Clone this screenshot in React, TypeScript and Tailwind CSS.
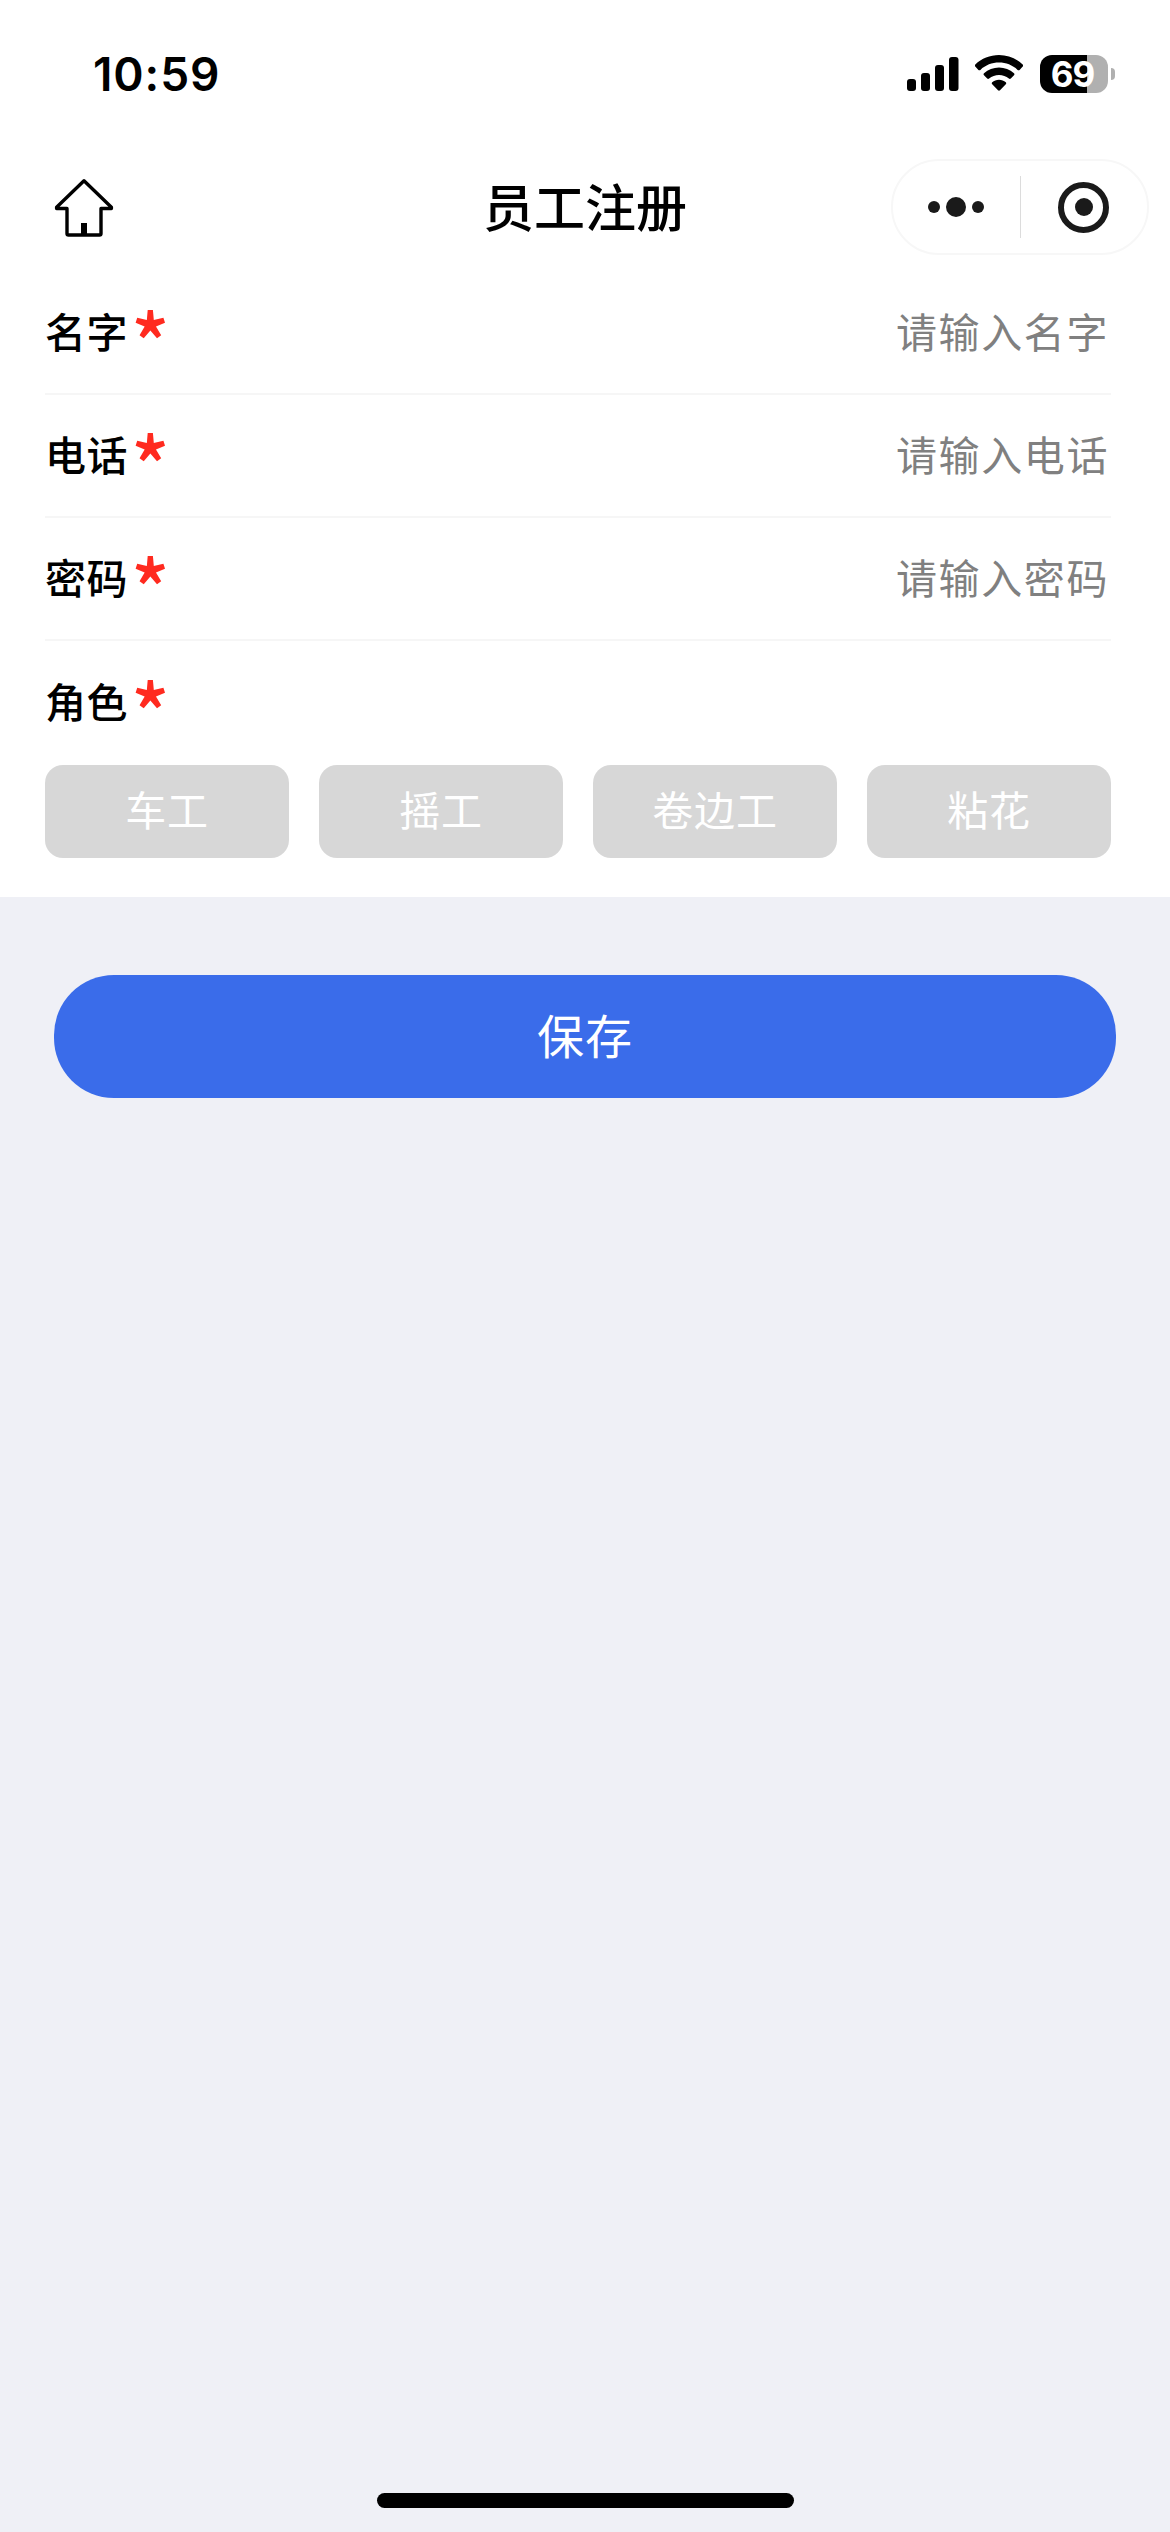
const fields = [
  { label: "名字", placeholder: "请输入名字" },
  { label: "电话", placeholder: "请输入电话" },
  { label: "密码", placeholder: "请输入密码" },
];

const roles = ["车工", "摇工", "卷边工", "粘花"];

function StatusBar() {
  return (
    <div className="flex h-[150px] items-start justify-between pl-[93px] pr-[55px]">
      <span className="mt-[46px] font-['Inter'] text-[46px] font-semibold leading-[56px] tracking-[0.900px]">
        10:59
      </span>
      <div className="mt-[55px] flex items-start">
        <svg className="mt-[2px] h-[34px] w-[52px]" viewBox="0 0 52 34">
          <rect x="0" y="22" width="9" height="12" rx="3" />
          <rect x="14" y="16" width="9" height="18" rx="3" />
          <rect x="28" y="8" width="9" height="26" rx="3" />
          <rect x="42" y="0" width="9.5" height="34" rx="3" />
        </svg>
        <svg className="ml-4 h-[36px] w-[48px]" viewBox="0 0 48 36">
          <path d="M24 0C33 0 41.500 3.500 47.700 9.500C48.300 10.200 48.300 11 47.700 11.600L44.600 14.900C44 15.400 43.200 15.400 42.600 14.900C37.500 10.100 31 7.600 24 7.600S10.500 10.100 5.400 14.900C4.800 15.400 4 15.400 3.400 14.900L.3 11.600C-.3 11-.3 10.200.3 9.500C6.500 3.500 15 0 24 0Z" />
          <path d="M24 12.500C29.600 12.500 34.900 14.600 39 18.300C39.600 18.900 39.600 19.700 39 20.300L35.800 23.500C35.200 24.100 34.500 24.100 33.900 23.500C31.100 21.200 27.700 19.900 24 19.900S16.900 21.200 14.100 23.500C13.500 24.100 12.800 24.100 12.200 23.500L9 20.300C8.400 19.700 8.400 18.900 9 18.300C13.100 14.600 18.400 12.500 24 12.500Z" />
          <path d="M24 24.800C26.600 24.800 29 25.700 30.800 27.300C31.400 27.800 31.400 28.600 30.800 29.200L25 35.200C24.400 35.800 23.600 35.800 23 35.200L17.200 29.200C16.600 28.600 16.600 27.800 17.200 27.300C19 25.700 21.400 24.800 24 24.800Z" />
        </svg>
        <div className="ml-[17px] flex h-[38px] w-[68px] items-center justify-center rounded-[12px] bg-linear-to-r from-black from-[69%] to-[#b0b0b0] to-[69%] pr-[3px]">
          <span className="font-['Inter'] text-[35px] font-bold leading-[38px] tracking-[-1px] text-white">69</span>
        </div>
        <div className="ml-[3px] mt-[13px] h-[12px] w-[4px] rounded-r-full bg-[#b0b0b0]" />
      </div>
    </div>
  );
}

function NavBar() {
  return (
    <div className="grid h-[122px] grid-cols-[1fr_auto_1fr] items-start">
      <svg className="ml-[53px] mt-[27px] h-[62px] w-[62px]" viewBox="0 0 62 62" fill="none" stroke="#000" strokeWidth="3.4" strokeLinejoin="round">
        <path d="M31 3.800L3.600 30.200V31.500H14V56.500C14 57.500 14.500 58 15.500 58H46.500C47.500 58 48 57.500 48 56.500V31.500H58.400V30.200Z" />
        <path d="M31 46V58" strokeWidth="6" />
      </svg>
      <h1 className="mt-[17px] text-[51px] font-medium leading-[76px]">员工注册</h1>
      <div className="mr-[21px] mt-[9px] flex h-[96px] w-[258px] items-center justify-self-end rounded-full border-2 border-[#f7f7f7]">
        <div className="flex flex-1 items-center justify-center gap-[6px]">
          <i className="size-3 rounded-full bg-[#1a1a1a]" />
          <i className="size-5 rounded-full bg-[#1a1a1a]" />
          <i className="size-3 rounded-full bg-[#1a1a1a]" />
        </div>
        <div className="h-[62px] w-px bg-[#dcdcdc]" />
        <div className="flex flex-1 items-center justify-center">
          <div className="flex size-[51px] items-center justify-center rounded-full border-[6px] border-[#1a1a1a]">
            <i className="size-[18px] rounded-full bg-[#1a1a1a]" />
          </div>
        </div>
      </div>
    </div>
  );
}

function Label({ text }: { text: string }) {
  return (
    <div className="flex items-start">
      <span className="text-[41px] font-medium leading-[60px] tracking-[0.500px]">{text}</span>
      <span className="ml-[3px] mt-[9px] h-[51px] text-[80px] font-medium leading-[60px] text-[#ff2a1f]">*</span>
    </div>
  );
}

export default function App() {
  return (
    <div className="flex h-[2532px] w-[1170px] flex-col overflow-hidden bg-[#eff0f6] font-['Noto_Sans_CJK_SC',sans-serif] text-black">
      <header className="bg-white">
        <StatusBar />
        <NavBar />
      </header>

      <section className="h-[625px] bg-white pl-[45px] pr-[59px]">
        {fields.map((field) => (
          <div key={field.label} className="flex h-[123px] items-center justify-between border-b-2 border-[#f6f6f6] pb-[6px] pr-[2px]">
            <Label text={field.label} />
            <span className="text-[41px] leading-[60px] tracking-[1.600px] text-[#808080]">{field.placeholder}</span>
          </div>
        ))}
        <div className="flex h-[124px] items-center pb-[7px]">
          <Label text="角色" />
        </div>
        <div className="grid grid-cols-4 gap-[30px]">
          {roles.map((role) => (
            <button key={role} className="h-[93px] rounded-[18px] bg-[#d7d7d7] pb-[8px] text-[41px] leading-[60px] tracking-[0.800px] text-white">
              {role}
            </button>
          ))}
        </div>
      </section>

      <button className="mx-[54px] mt-[78px] h-[123px] rounded-[60px] bg-[#3a6cea] pb-[4px] text-[47px] tracking-[1px] text-white">
        保存
      </button>

      <div className="mx-auto mb-6 mt-auto h-[15px] w-[417px] rounded-full bg-black" />
    </div>
  );
}
